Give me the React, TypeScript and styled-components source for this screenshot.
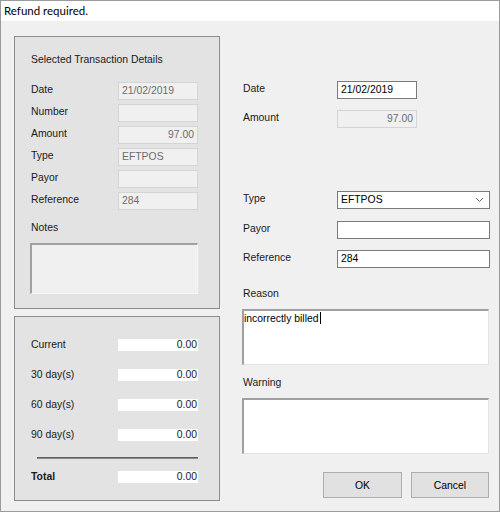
import React from 'react';
import styled, { createGlobalStyle } from 'styled-components';

const GlobalStyle = createGlobalStyle`
  html, body {
    margin: 0;
    padding: 0;
    background: #ffffff;
  }
  * {
    box-sizing: border-box;
  }
`;

interface Field {
  label: string;
  value: string;
  align?: 'left' | 'right';
}

const selectedDetails: Field[] = [
  { label: 'Date', value: '21/02/2019' },
  { label: 'Number', value: '' },
  { label: 'Amount', value: '97.00', align: 'right' },
  { label: 'Type', value: 'EFTPOS' },
  { label: 'Payor', value: '' },
  { label: 'Reference', value: '284' },
];

const aging = [
  { label: 'Current', value: '0.00' },
  { label: '30 day(s)', value: '0.00' },
  { label: '60 day(s)', value: '0.00' },
  { label: '90 day(s)', value: '0.00' },
];

function App() {
  return (
    <>
      <GlobalStyle />
      <Window>
        <TitleBar>Refund required.</TitleBar>

        <Body>
          <LeftColumn>
            <DetailsPanel>
              <PanelTitle>Selected Transaction Details</PanelTitle>
              <DetailsGrid>
                {selectedDetails.map((f) => (
                  <React.Fragment key={f.label}>
                    <Label>{f.label}</Label>
                    <TextBox $disabled $align={f.align} $width={80}>
                      {f.value}
                    </TextBox>
                  </React.Fragment>
                ))}
              </DetailsGrid>
              <NotesLabel>Notes</NotesLabel>
              <NotesBox />
            </DetailsPanel>

            <AgingPanel>
              <AgingGrid>
                {aging.map((a) => (
                  <React.Fragment key={a.label}>
                    <AgingLabel>{a.label}</AgingLabel>
                    <AgingValue>{a.value}</AgingValue>
                  </React.Fragment>
                ))}
              </AgingGrid>
              <Divider />
              <AgingGrid>
                <AgingLabel $bold>Total</AgingLabel>
                <AgingValue>0.00</AgingValue>
              </AgingGrid>
            </AgingPanel>
          </LeftColumn>

          <RightColumn>
            <FieldRow>
              <Label>Date</Label>
              <TextBox $width={80}>21/02/2019</TextBox>
            </FieldRow>
            <FieldRow $top={11}>
              <Label>Amount</Label>
              <TextBox $disabled $align="right" $width={80}>
                97.00
              </TextBox>
            </FieldRow>
            <FieldRow $top={63}>
              <Label>Type</Label>
              <SelectBox>
                EFTPOS
                <svg width="9" height="6" viewBox="0 0 9 6">
                  <path d="M1 1 L4.5 4.5 L8 1" fill="none" stroke="#606060" strokeWidth="1" />
                </svg>
              </SelectBox>
            </FieldRow>
            <FieldRow $top={12}>
              <Label>Payor</Label>
              <TextBox $width={153} />
            </FieldRow>
            <FieldRow $top={11}>
              <Label>Reference</Label>
              <TextBox $width={153}>284</TextBox>
            </FieldRow>

            <SectionLabel $top={19}>Reason</SectionLabel>
            <MemoBox>
              incorrectly billed
              <Caret />
            </MemoBox>

            <SectionLabel $top={11}>Warning</SectionLabel>
            <MemoBox />

            <ButtonRow>
              <Button>OK</Button>
              <Button $width={78}>Cancel</Button>
            </ButtonRow>
          </RightColumn>
        </Body>
      </Window>
    </>
  );
}

// Styles
const Window = styled.div`
  width: 500px;
  height: 512px;
  border: 1px solid #9b9b9b;
  display: flex;
  flex-direction: column;
  font-family: 'Liberation Sans', Arial, sans-serif;
  font-size: 10.4px;
  color: #000;
  overflow: hidden;
`;

const TitleBar = styled.div`
  height: 20px;
  flex-shrink: 0;
  background: #ffffff;
  padding: 3px 0 0 3px;
  font-family: Lato, 'Noto Sans', sans-serif;
  font-size: 11.5px;
  line-height: 14px;
  color: #000;
`;

const Body = styled.div`
  flex: 1;
  display: flex;
  background: #f0f0f0;
  padding: 15px 9px 0 13px;
`;

const LeftColumn = styled.div`
  width: 206px;
  display: flex;
  flex-direction: column;
  gap: 7px;
`;

const Panel = styled.section`
  border: 1px solid #8c8c8c;
  background: #e3e3e3;
`;

const DetailsPanel = styled(Panel)`
  height: 273px;
  padding: 16px 20px 0 16px;
`;

const PanelTitle = styled.div`
  line-height: 13px;
  color: #1a1a1a;
`;

const DetailsGrid = styled.div`
  display: grid;
  grid-template-columns: 87px 80px;
  grid-auto-rows: 18px;
  row-gap: 4px;
  margin-top: 16px;
`;

const Label = styled.div`
  line-height: 13px;
  padding-top: 1px;
  color: #1a1a1a;
`;

const TextBox = styled.div<{ $disabled?: boolean; $align?: 'left' | 'right'; $width: number }>`
  width: ${(p) => p.$width}px;
  height: 18px;
  border: 1px solid ${(p) => (p.$disabled ? '#d4d4d4' : '#7a7a7a')};
  background: ${(p) => (p.$disabled ? '#f0f0f0' : '#ffffff')};
  color: ${(p) => (p.$disabled ? '#6d6d6d' : '#000')};
  text-align: ${(p) => p.$align ?? 'left'};
  padding: 0 3px;
  line-height: 16px;
  white-space: nowrap;
`;

const NotesLabel = styled.div`
  line-height: 13px;
  margin-top: 11px;
  color: #1a1a1a;
`;

const NotesBox = styled.div`
  width: 168px;
  height: 51px;
  margin: 9px 0 0 -1px;
  background: #f0f0f0;
  border-style: solid;
  border-width: 2px 1px 1px 2px;
  border-color: #a0a0a0 #f7f7f7 #f7f7f7 #a0a0a0;
`;

const AgingPanel = styled(Panel)`
  height: 185px;
  padding: 22px 20px 0 16px;
`;

const AgingGrid = styled.div`
  display: grid;
  grid-template-columns: 87px 80px;
  grid-auto-rows: 12px;
  row-gap: 18px;
`;

const AgingLabel = styled.div<{ $bold?: boolean }>`
  line-height: 12px;
  font-weight: ${(p) => (p.$bold ? 700 : 400)};
  color: #1a1a1a;
`;

const AgingValue = styled.div`
  background: #ffffff;
  text-align: right;
  line-height: 12px;
  padding-right: 1px;
  color: #1a1a1a;
`;

const Divider = styled.div`
  width: 161px;
  height: 2px;
  margin: 16px 0 12px 6px;
  background: #5e5e5e;
  border-bottom: 1px solid #8a8a8a;
`;

const RightColumn = styled.div`
  width: 248px;
  margin-left: 22px;
  padding-top: 45px;
  display: flex;
  flex-direction: column;
`;

const FieldRow = styled.div<{ $top?: number }>`
  display: grid;
  grid-template-columns: 94px auto;
  margin-top: ${(p) => p.$top ?? 0}px;
  padding-left: 1px;
`;

const SelectBox = styled.div`
  width: 153px;
  height: 18px;
  border: 1px solid #7a7a7a;
  background: #ffffff;
  display: flex;
  align-items: center;
  justify-content: space-between;
  padding: 0 5px 0 3px;
  line-height: 16px;

  svg {
    display: block;
  }
`;

const SectionLabel = styled.div<{ $top: number }>`
  line-height: 13px;
  margin-top: ${(p) => p.$top}px;
  padding-left: 1px;
  color: #1a1a1a;
`;

const MemoBox = styled.div`
  width: 247px;
  height: 56px;
  margin-top: 9px;
  background: #ffffff;
  border-style: solid;
  border-width: 2px 1px 1px 2px;
  border-color: #a0a0a0 #e3e3e3 #e3e3e3 #a0a0a0;
  padding: 1px 0 0 0;
  line-height: 13px;
  display: flex;
  align-items: flex-start;
`;

const Caret = styled.span`
  display: inline-block;
  width: 1px;
  height: 12px;
  margin-left: 1px;
  background: #000;
`;

const ButtonRow = styled.div`
  display: flex;
  justify-content: flex-end;
  gap: 9px;
  margin-top: 18px;
  padding-right: 1px;
`;

const Button = styled.button<{ $width?: number }>`
  width: ${(p) => p.$width ?? 79}px;
  height: 26px;
  background: #e1e1e1;
  border: 1px solid #adadad;
  font-family: 'Liberation Sans', Arial, sans-serif;
  font-size: 10.4px;
  color: #000;
  padding: 0;
`;

export default App;
